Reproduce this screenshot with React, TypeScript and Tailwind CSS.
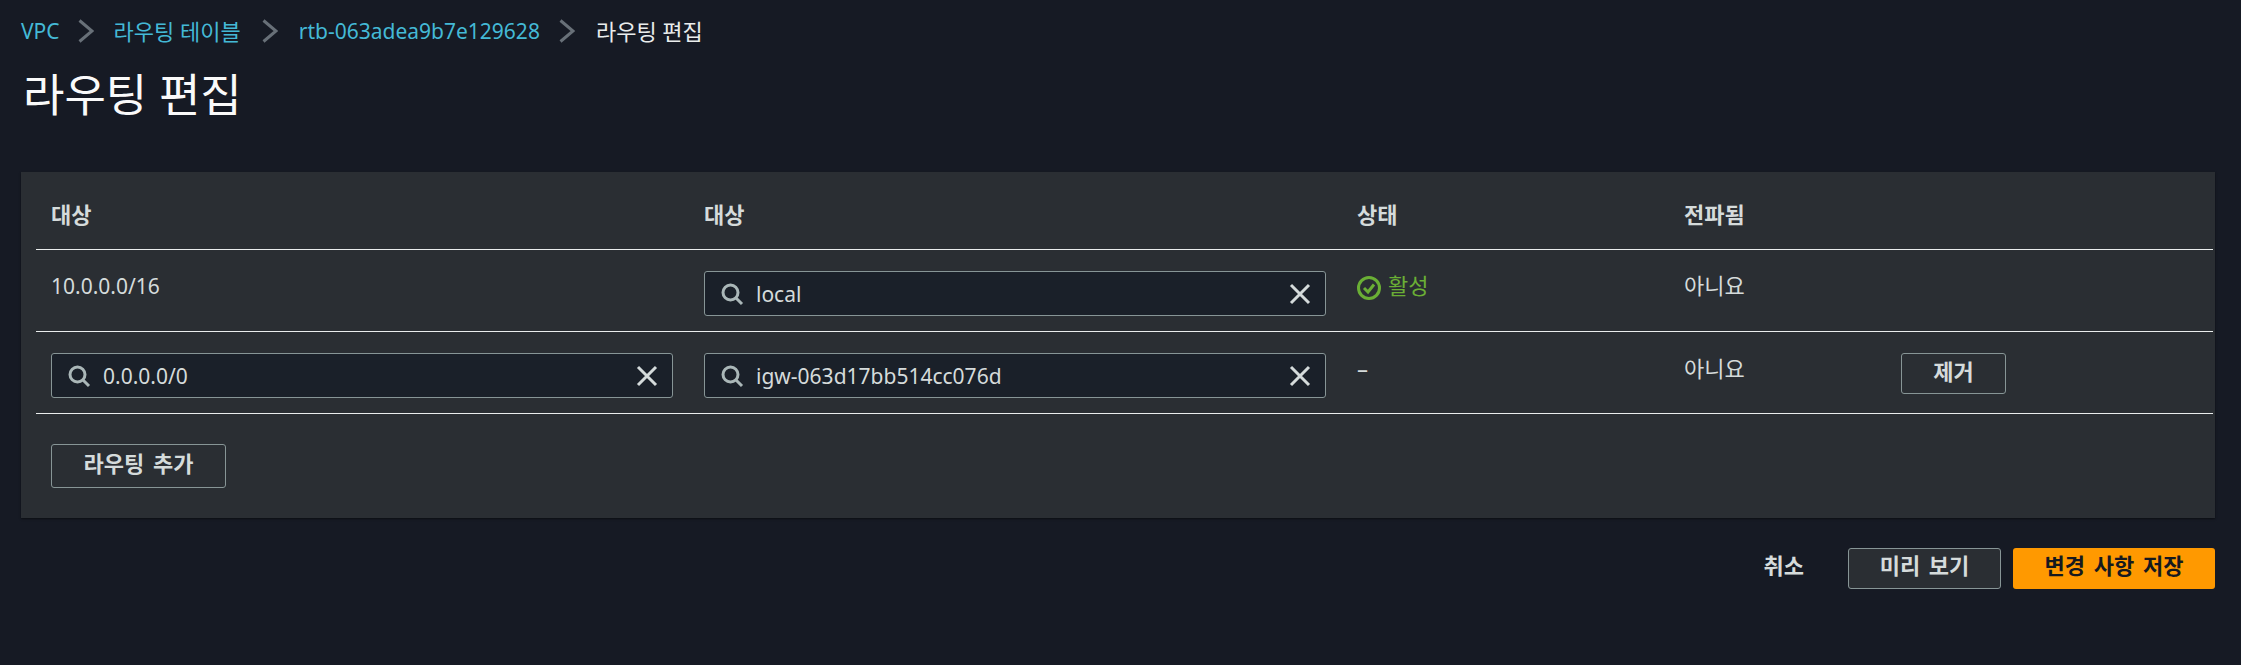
const font = { fontFamily: '"Noto Sans", "Noto Sans CJK KR", sans-serif' };

function Chevron() {
  return (
    <svg width="16" height="24" viewBox="0 0 16 24" className="shrink-0 text-[#687078]" fill="none" stroke="currentColor" strokeWidth="3">
      <path d="M1.5 1.5 L14 12 L1.5 22.5" />
    </svg>
  );
}

function SearchField({ value }: { value: string }) {
  return (
    <div className="flex h-[45px] items-center rounded-[3px] border border-[#879596] bg-[#1a2029] pl-[15px] pr-[14px]">
      <svg width="24" height="24" viewBox="0 0 24 24" fill="none" stroke="#aab7b8" strokeWidth="3" className="shrink-0">
        <circle cx="10.5" cy="10.5" r="7.5" />
        <path d="M16 16 L22 22" />
      </svg>
      <span className="ml-[12px] flex-1 text-[21px] leading-[28px] text-[#d5dbdb]">{value}</span>
      <svg width="22" height="22" viewBox="0 0 22 22" fill="none" stroke="#d5dbdb" strokeWidth="3" className="shrink-0">
        <path d="M2 2 L20 20 M20 2 L2 20" />
      </svg>
    </div>
  );
}

function Outline({ label, className }: { label: string; className: string }) {
  return (
    <button className={`flex items-center justify-center rounded-[3px] border border-[#879596] pb-[6px] text-[22px] font-bold text-[#d5dbdb] [word-spacing:3px] ${className}`}>
      {label}
    </button>
  );
}

const gridCols = "grid grid-cols-[668px_653px_327px_217px_1fr] border-b border-[#eaeded]";

export default function App() {
  return (
    <div className="h-[665px] w-[2241px] overflow-hidden bg-[#161a24]" style={font}>
      <nav className="flex h-[62px] items-center pl-[21px] leading-[28px]">
        <span className="text-[21px] text-[#44b9d6]">VPC</span>
        <span className="ml-[18px]"><Chevron /></span>
        <span className="ml-[20px] text-[22px] text-[#44b9d6]">라우팅 테이블</span>
        <span className="ml-[21px]"><Chevron /></span>
        <span className="ml-[21px] text-[21px] text-[#44b9d6]">rtb-063adea9b7e129628</span>
        <span className="ml-[19px]"><Chevron /></span>
        <span className="ml-[21px] text-[22px] text-[#eaeded]">라우팅 편집</span>
      </nav>
      <h1 className="ml-[23px] mt-[3px] h-[60px] text-[45px] font-normal leading-[60px] text-[#fafafa]">라우팅 편집</h1>

      <section className="ml-[21px] mt-[47px] h-[346px] w-[2194px] bg-[#2a2e33] pl-[15px] pr-[2px] shadow-[0_1px_2px_rgba(0,0,0,0.5)]">
        <div className={`${gridCols} h-[78px] items-center pt-[7px] text-[22px] font-bold text-[#d5dbdb]`}>
          <div className="pl-[15px]">대상</div>
          <div>대상</div>
          <div>상태</div>
          <div>전파됨</div>
          <div />
        </div>

        <div className={`${gridCols} h-[82px] text-[22px] leading-[28px] text-[#d5dbdb]`}>
          <div className="pl-[15px] pt-[22px] text-[21px]">10.0.0.0/16</div>
          <div className="pt-[21px] pr-[31px]"><SearchField value="local" /></div>
          <div className="flex items-start pt-[21px] text-[#6aaf35]">
            <svg width="24" height="24" viewBox="0 0 24 24" fill="none" stroke="currentColor" strokeWidth="3" className="mt-[5px] shrink-0">
              <circle cx="12" cy="12" r="10.5" />
              <path d="M7 12 L11 16 L17 8.5" />
            </svg>
            <span className="ml-[7px]">활성</span>
          </div>
          <div className="pt-[21px]">아니요</div>
          <div />
        </div>

        <div className={`${gridCols} h-[82px] text-[22px] leading-[28px] text-[#d5dbdb]`}>
          <div className="pl-[15px] pt-[21px] pr-[31px]"><SearchField value="0.0.0.0/0" /></div>
          <div className="pt-[21px] pr-[31px]"><SearchField value="igw-063d17bb514cc076d" /></div>
          <div className="pt-[22px]">–</div>
          <div className="pt-[22px]">아니요</div>
          <div className="pt-[21px]"><Outline label="제거" className="h-[41px] w-[105px]" /></div>
        </div>

        <div className="pl-[15px] pt-[30px]">
          <Outline label="라우팅 추가" className="h-[44px] w-[175px]" />
        </div>
      </section>

      <footer className="ml-[21px] mt-[30px] flex w-[2194px] items-center justify-end">
        <span className="mb-[6px] mr-[44px] text-[22px] font-bold text-[#d5dbdb]">취소</span>
        <Outline label="미리 보기" className="h-[41px] w-[153px] bg-[#2a2e33]" />
        <button className="ml-[12px] h-[41px] w-[202px] rounded-[3px] bg-[#ff9900] pb-[6px] text-[22px] font-bold text-[#16191f] [word-spacing:3px]">변경 사항 저장</button>
      </footer>
    </div>
  );
}
